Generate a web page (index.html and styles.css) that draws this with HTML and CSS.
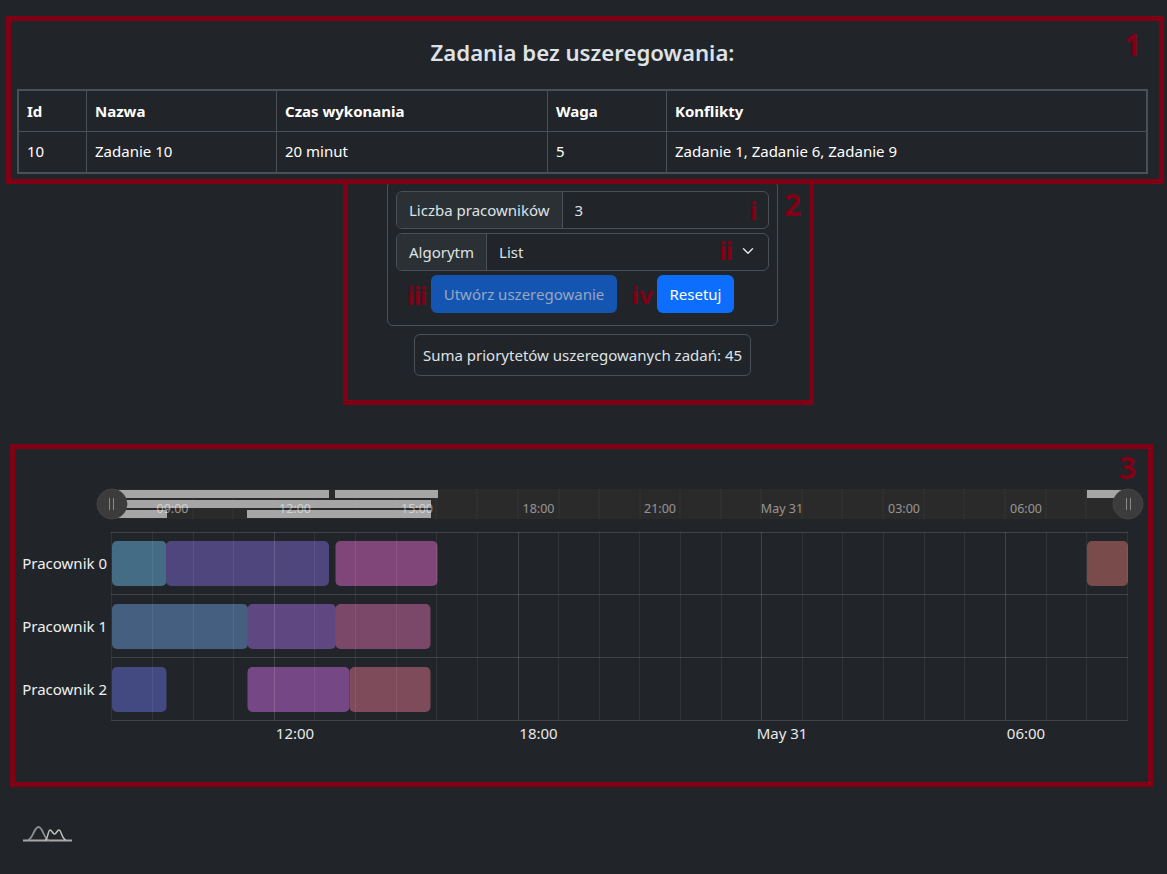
FILE: index.html
```html
<!DOCTYPE html>
<html lang="pl">
<head>
<meta charset="utf-8">
<title>Uszeregowanie</title>
<link rel="stylesheet" href="styles.css">
</head>
<body>
<main class="page">
  <section class="unscheduled">
    <h3 class="title">Zadania bez uszeregowania:</h3>
    <table class="tasks">
      <colgroup><col class="c-id"><col class="c-name"><col class="c-time"><col class="c-weight"><col class="c-conf"></colgroup>
      <thead><tr><th>Id</th><th>Nazwa</th><th>Czas wykonania</th><th>Waga</th><th>Konflikty</th></tr></thead>
      <tbody><tr><td>10</td><td>Zadanie 10</td><td>20 minut</td><td>5</td><td>Zadanie 1, Zadanie 6, Zadanie 9</td></tr></tbody>
    </table>
  </section>

  <section class="controls">
    <div class="card">
      <div class="group"><div class="addon">Liczba pracowników</div><div class="field">3</div></div>
      <div class="group"><div class="addon">Algorytm</div><div class="field field-select">List
        <svg class="chevron" viewBox="0 0 16 16" width="12" height="12"><path d="M2 5l6 6 6-6" fill="none" stroke="#dee2e6" stroke-width="2" stroke-linecap="round" stroke-linejoin="round"/></svg></div></div>
      <div class="buttons">
        <button class="btn btn-disabled" type="button">Utwórz uszeregowanie</button>
        <button class="btn btn-reset" type="button">Resetuj</button>
      </div>
    </div>
    <div class="sum">Suma priorytetów uszeregowanych zadań: 45</div>
  </section>

  <svg class="chart" viewBox="0 480 1167 270" width="1167" height="270">
    <rect class="slider-bg" x="112" y="489" width="1016" height="30"/>
    <g class="slider-grid">
      <path d="M152 489V519M193 489V519M233 489V519M274 489V519M314 489V519M355 489V519M396 489V519M436 489V519M477 489V519M518 489V519M559 489V519M599 489V519M640 489V519M680 489V519M721 489V519M761 489V519M802 489V519M842 489V519M883 489V519M924 489V519M964 489V519M1005 489V519M1046 489V519M1086 489V519"/>
    </g>
    <g class="slider-bars">
      <rect x="112" y="490" width="217" height="8"/>
      <rect x="335" y="490" width="103" height="8"/>
      <rect x="1087" y="490" width="34" height="8"/>
      <rect x="112" y="500" width="319" height="8"/>
      <rect x="112" y="510" width="55" height="8"/>
      <rect x="247" y="510" width="184" height="8"/>
    </g>
    <g class="slider-labels">
      <text x="172.5" y="513">09:00</text><text x="295" y="513">12:00</text><text x="417" y="513">15:00</text><text x="538.500" y="513">18:00</text><text x="660" y="513">21:00</text><text x="782" y="513">May 31</text><text x="904" y="513">03:00</text><text x="1026" y="513">06:00</text>
    </g>
    <g class="handle"><circle cx="112" cy="504" r="15"/><path d="M109.500 498V510M113.500 498V510"/></g>
    <g class="handle"><circle cx="1128" cy="504" r="15"/><path d="M1126.500 498V510M1130.500 498V510"/></g>

    <g class="bars">
      <rect x="112" y="541" width="54.500" height="45" rx="5" fill="#446c85"/>
      <rect x="166" y="541" width="163" height="45" rx="5" fill="#4f467e"/>
      <rect x="335.500" y="541" width="102" height="45" rx="5" fill="#80467a"/>
      <rect x="1087" y="541" width="41" height="45" rx="5" fill="#7a4b4b"/>
      <rect x="112" y="604" width="136" height="45" rx="5" fill="#455f81"/>
      <rect x="247.500" y="604" width="88.500" height="45" rx="5" fill="#5f4782"/>
      <rect x="335.500" y="604" width="95" height="45" rx="5" fill="#7c486a"/>
      <rect x="112" y="667" width="54.500" height="45" rx="5" fill="#434981"/>
      <rect x="247.500" y="667" width="102" height="45" rx="5" fill="#754784"/>
      <rect x="349.500" y="667" width="81" height="45" rx="5" fill="#7d4b5a"/>
    </g>
    <path class="grid-minor" d="M111.500 532V720M152.500 532V720M193.500 532V720M233.500 532V720M314.500 532V720M355.500 532V720M396.500 532V720M436.500 532V720M477.500 532V720M558.500 532V720M599.500 532V720M639.500 532V720M680.500 532V720M721.500 532V720M802.500 532V720M842.500 532V720M883.500 532V720M924.500 532V720M964.500 532V720M1046.500 532V720M1086.500 532V720M1127.500 532V720"/>
    <path class="grid-major" d="M274.500 532V720M518.500 532V720M761.500 532V720M1005.500 532V720"/>
    <path class="grid-row" d="M111 532.500H1128M111 594.500H1128M111 657.500H1128M111 720.500H1128"/>

    <g class="row-labels">
      <text x="107" y="569">Pracownik 0</text><text x="107" y="632">Pracownik 1</text><text x="107" y="695">Pracownik 2</text>
    </g>
    <g class="axis-labels">
      <text x="295" y="739">12:00</text><text x="538.500" y="739">18:00</text><text x="782" y="739">May 31</text><text x="1026" y="739">06:00</text>
    </g>
  </svg>

  <svg class="logo" viewBox="22 826 52 16" width="52" height="16">
    <path d="M23 840.500H72" stroke="#a8a8a8" stroke-width="1.800" fill="none"/>
    <path d="M28 840C33 839 34 827 38.500 827C43 827 43.500 839 49 840.500" stroke="#8f8f8f" stroke-width="1.800" fill="none"/>
    <path d="M45 840.500C48 839 48 830 50 830C52 830 52.500 834 54.500 834C56.500 834 57 830 59 830C61.500 830 61.500 839 66 840" stroke="#bdbdbd" stroke-width="1.500" fill="none"/>
  </svg>
</main>

<div class="note box1"></div>
<div class="note box2"></div>
<div class="note box3"></div>
<span class="mark n1">1</span>
<span class="mark n2">2</span>
<span class="mark n3">3</span>
<span class="mark r r1">i</span>
<span class="mark r r2">ii</span>
<span class="mark r r3">iii</span>
<span class="mark r r4">iv</span>
</body>
</html>
```
FILE: styles.css
```css
* { box-sizing: border-box; }
html, body { margin: 0; height: 100%; }
body {
  position: relative;
  background: #212529;
  color: #dee2e6;
  font-family: "Noto Sans", "Open Sans", sans-serif;
  font-size: 15px;
  line-height: 24px;
  overflow: hidden;
}
.page { display: flex; flex-direction: column; }

.unscheduled { padding: 38px 19px 0 17px; }
.title {
  margin: 0 0 22px;
  font-size: 22.200px;
  line-height: 29px;
  font-weight: 600;
  text-align: center;
}
.tasks {
  width: 1131px;
  table-layout: fixed;
  border-collapse: separate;
  border-spacing: 0;
  border: 2px solid #495057;
  color: #fff;
}
.c-id { width: 68px; }
.c-name { width: 190px; }
.c-time { width: 271px; }
.c-weight { width: 119px; }
.tasks th, .tasks td {
  padding: 8px;
  text-align: left;
  border-right: 1px solid #495057;
}
.tasks th { border-bottom: 1px solid #495057; font-weight: 700; height: 41px; }
.tasks td { height: 40px; padding-top: 7px; padding-bottom: 9px; font-weight: 400; }
.tasks th:last-child, .tasks td:last-child { border-right: 0; }

.controls { display: flex; flex-direction: column; align-items: center; margin-top: 7px; padding-right: 2px; }
.card {
  width: 391px;
  padding: 9px 8px 12px;
  border: 1px solid #495057;
  border-radius: 6px;
  display: flex;
  flex-direction: column;
  gap: 4px;
}
.group {
  display: flex;
  height: 38px;
  border: 1px solid #495057;
  border-radius: 6px;
  overflow: hidden;
}
.addon {
  padding: 6px 12px;
  background: #2b3035;
  border-right: 1px solid #495057;
  white-space: nowrap;
}
.field { flex: 1; padding: 6px 12px; position: relative; }
.chevron { position: absolute; right: 14px; top: 11px; }
.buttons { display: flex; justify-content: center; gap: 40px; }
.btn {
  height: 38px;
  padding: 0;
  border: 0;
  border-radius: 6px;
  background: #0d6efd;
  color: #fff;
  font: inherit;
}
.btn-disabled { width: 186px; background: #1455b2; color: #98a6bf; }
.btn-reset { width: 77px; }
.sum {
  margin-top: 8px;
  padding: 8px;
  border: 1px solid #495057;
  border-radius: 6px;
  height: 42px;
}

.chart { display: block; margin-top: 104px; }
.slider-bg { fill: #2b2a2a; }
.slider-grid path { stroke: rgba(255,255,255,.05); stroke-width: 1; fill: none; }
.slider-bars rect { fill: #a6a6a6; }
.slider-labels text { font-size: 12.500px; fill: rgba(255,255,255,.5); text-anchor: middle; }
.handle circle { fill: #3c3c3c; stroke: #444; stroke-width: 1; }
.handle path { stroke: #8a8a8a; stroke-width: 1; fill: none; }
.grid-minor { stroke: rgba(255,255,255,.07); stroke-width: 1; fill: none; }
.grid-major { stroke: rgba(255,255,255,.14); stroke-width: 1; fill: none; }
.grid-row { stroke: rgba(255,255,255,.14); stroke-width: 1; fill: none; }
.row-labels text { font-size: 15px; fill: #f0f0f0; text-anchor: end; }
.axis-labels text { font-size: 15px; fill: #e8e8e8; text-anchor: middle; }

.logo { display: block; margin: 76px 0 0 22px; }

.note { position: absolute; border: 5px solid #800015; pointer-events: none; }
.box1 { left: 6px; top: 16px; width: 1158px; height: 168px; }
.box2 { left: 343px; top: 179px; width: 471px; height: 226px; }
.box3 { left: 10px; top: 444px; width: 1143px; height: 343px; }
.mark {
  position: absolute;
  color: #800015;
  font-weight: 700;
  font-size: 30px;
  line-height: 30px;
}
.n1 { left: 1124px; top: 30px; }
.n2 { left: 784px; top: 190px; }
.n3 { left: 1119px; top: 453px; }
.r { font-size: 25px; letter-spacing: -1px; }
.r1 { left: 750px; top: 195px; }
.r2 { left: 719px; top: 235px; }
.r3 { left: 407px; top: 280px; }
.r4 { left: 632px; top: 280px; font-size: 24px; letter-spacing: 0; }
```
